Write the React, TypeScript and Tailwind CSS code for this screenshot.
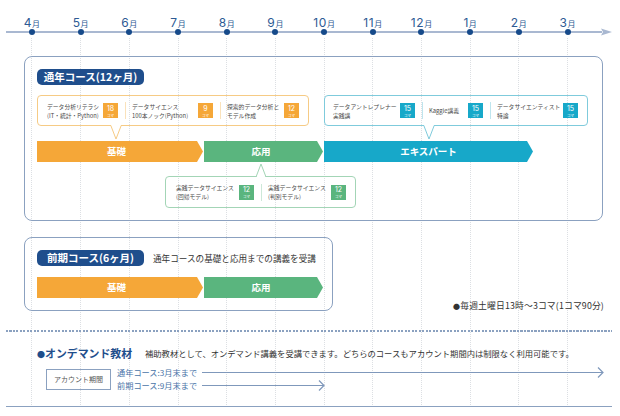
const months = ["4", "5", "6", "7", "8", "9", "10", "11", "12", "1", "2", "3"];

const fontStack = "font-['Noto_Sans_CJK_JP','Noto_Sans',sans-serif]";

function Badge({ n, color }: { n: string; color: string }) {
  return (
    <div className={`w-[15px] h-[15px] shrink-0 flex flex-col items-center justify-center text-white font-['Inter',sans-serif] ${color}`}>
      <span className="text-[7px] leading-[9px]">{n}</span>
      <span className="text-[3.5px] leading-[5px] font-['Noto_Sans_CJK_JP',sans-serif]">コマ</span>
    </div>
  );
}

function Item({
  lines,
  n,
  color,
  textClass,
  sep,
}: {
  lines: string[];
  n: string;
  color: string;
  textClass: string;
  sep?: string;
}) {
  return (
    <>
      <div className={`shrink-0 text-[5.8px] leading-[9px] text-[#4a4a4a] whitespace-nowrap ${textClass}`}>
        {lines.map((l) => (
          <div key={l}>{l}</div>
        ))}
      </div>
      <Badge n={n} color={color} />
      {sep && <div className={`w-px h-[17px] ml-[7px] mr-[6px] shrink-0 ${sep}`} />}
    </>
  );
}

function Notch({ stroke, className, up }: { stroke: string; className: string; up?: boolean }) {
  return (
    <svg className={`absolute ${className}`} width="12" height="15" viewBox="0 0 12 15">
      {up ? (
        <>
          <path d="M1 15 L6 1 L11 15 Z" fill="#fff" />
          <path d="M1 14 L6 1 L11 14" fill="none" stroke={stroke} strokeWidth="1" />
        </>
      ) : (
        <>
          <path d="M1 0 L6 14 L11 0 Z" fill="#fff" />
          <path d="M1 1 L6 14 L11 1" fill="none" stroke={stroke} strokeWidth="1" />
        </>
      )}
    </svg>
  );
}

function Pill({ children }: { children: string }) {
  return (
    <div className="w-[107px] h-[16px] rounded-[5px] bg-[#1f4e8c] text-white text-[10.5px] leading-[16px] font-bold text-center shrink-0 whitespace-nowrap">
      {children}
    </div>
  );
}

function Bars() {
  return (
    <>
      <div className="w-[166px] h-[21px] bg-[#f5a738] text-white text-[9.5px] font-bold leading-[21px] text-center pr-[7px] [clip-path:polygon(0_0,160px_0,100%_50%,160px_100%,0_100%)]">
        基礎
      </div>
      <div className="w-[119px] h-[21px] ml-px bg-[#5ab57e] text-white text-[9.5px] font-bold leading-[21px] text-center pr-[5px] [clip-path:polygon(0_0,113px_0,100%_50%,113px_100%,0_100%)]">
        応用
      </div>
    </>
  );
}

function LongArrow({ width }: { width: number }) {
  return (
    <svg width={width} height="11" viewBox={`0 0 ${width} 11`} className="shrink-0">
      <path d={`M0 5.5 H${width - 1}`} stroke="#7f98bb" strokeWidth="1.2" />
      <path d={`M${width - 6} 0.5 L${width - 1} 5.5 L${width - 6} 10.5`} fill="none" stroke="#7f98bb" strokeWidth="1.2" />
    </svg>
  );
}

export default function App() {
  return (
    <div className={`relative w-[620px] h-[416px] overflow-hidden bg-white ${fontStack}`}>
      {/* month guide lines */}
      <div className="absolute top-[38px] left-[7.6px] h-[367px] grid grid-cols-[repeat(12,48.7px)]">
        {months.map((m, i) => (
          <div key={i} className="flex justify-center">
            <div className="h-full border-l border-dotted border-[#dcdfe3]" />
          </div>
        ))}
      </div>

      {/* timeline */}
      <div className="relative h-[56px]">
        <div className="absolute left-[6px] top-[31px] w-[596px] h-[2px] bg-[#a9b8d1]" />
        <svg className="absolute left-[601px] top-[28px]" width="11" height="8" viewBox="0 0 11 8">
          <path d="M0 0.5 L11 4 L0 7.5 L2 4 Z" fill="#a9b8d1" />
        </svg>
        <div className="relative pl-[7.6px] pt-[12px] grid grid-cols-[repeat(12,48.7px)]">
          {months.map((m, i) => (
            <div key={i} className="flex flex-col items-center">
              <div className="h-[16px] text-[#2d5a94] leading-[16px] whitespace-nowrap">
                <span className="text-[12px] font-['Inter',sans-serif] tracking-[0.6px]">{m}</span>
                <span className="text-[8px]">月</span>
              </div>
              <div className="mt-px w-[6px] h-[6px] rounded-full bg-[#164a8a]" />
            </div>
          ))}
        </div>
      </div>

      {/* full year course */}
      <section className="relative ml-[24px] w-[579px] h-[165px] border border-[#8ba1c0] rounded-[8px] pl-[12px] pt-[12px]">
        <Pill>通年コース(12ヶ月)</Pill>

        <div className="flex mt-[10px]">
          <div className="relative w-[272px] h-[31px] border border-[#f6cb85] rounded-[4px] pl-[9px] flex items-center">
            <Item lines={["データ分析リテラシ", "(IT・統計・Python)"]} n="18" color="bg-[#f5a738]" textClass="w-[56px]" sep="bg-[#fae2bb]" />
            <Item lines={["データサイエンス", "100本ノック(Python)"]} n="9" color="bg-[#f5a738]" textClass="w-[66px]" sep="bg-[#fae2bb]" />
            <Item lines={["探索的データ分析と", "モデル作成"]} n="12" color="bg-[#f5a738]" textClass="w-[57px]" />
            <Notch stroke="#f6cb85" className="left-[72px] top-[29px]" />
          </div>
          <div className="relative ml-[15px] w-[264px] h-[31px] border border-[#7fcbdc] rounded-[4px] pl-[8px] flex items-center">
            <Item lines={["データアントレプレナー", "実践講"]} n="15" color="bg-[#17a8c9]" textClass="w-[67px]" sep="bg-[#bfe5ee]" />
            <Item lines={["Kaggle講義"]} n="15" color="bg-[#17a8c9]" textClass="w-[39px]" sep="bg-[#bfe5ee]" />
            <Item lines={["データサイエンティスト", "特論"]} n="15" color="bg-[#17a8c9]" textClass="w-[66px]" />
            <Notch stroke="#7fcbdc" className="left-[98px] top-[29px]" />
          </div>
        </div>

        <div className="flex mt-[15px]">
          <Bars />
          <div className="w-[209px] h-[21px] ml-px bg-[#17a8c9] text-white text-[9.5px] font-bold leading-[21px] text-center [clip-path:polygon(0_0,203px_0,100%_50%,203px_100%,0_100%)]">
            エキスパート
          </div>
        </div>

        <div className="relative ml-[128px] mt-[14px] w-[191px] h-[32px] border border-[#a3d5b6] rounded-[4px] pl-[10px] flex items-center">
          <Item lines={["実践データサイエンス", "(回帰モデル)"]} n="12" color="bg-[#5ab57e]" textClass="w-[63px]" sep="bg-[#cde8d8]" />
          <Item lines={["実践データサイエンス", "(判別モデル)"]} n="12" color="bg-[#5ab57e]" textClass="w-[63px]" />
          <Notch up stroke="#a3d5b6" className="left-[89px] top-[-14px]" />
        </div>
      </section>

      {/* first half course and schedule note */}
      <div className="relative flex h-[74px] mt-[16px] ml-[24px] w-[580px]">
        <section className="w-[309px] h-[74px] border border-[#8ba1c0] rounded-[8px] pl-[12px] pt-[12px] shrink-0">
          <div className="flex items-center">
            <Pill>前期コース(6ヶ月)</Pill>
            <span className="ml-[9px] text-[8.6px] text-[#333] whitespace-nowrap">通年コースの基礎と応用までの講義を受講</span>
          </div>
          <div className="flex mt-[11px]">
            <Bars />
          </div>
        </section>
        <div className="ml-auto mt-[62px] text-[8.8px] leading-[13px] tracking-[0.15px] text-[#333] whitespace-nowrap">
          <span className="text-[7px]">●</span>毎週土曜日13時〜3コマ(1コマ90分)
        </div>
      </div>

      <div className="relative mt-[19px] ml-[6px] w-[606px] h-[2px] bg-[repeating-linear-gradient(90deg,#8ba1c0_0_2px,transparent_2px_3.5px)]" />

      {/* on demand */}
      <section className="relative pl-[37px] pt-[13px]">
        <div className="flex items-center h-[16px] whitespace-nowrap">
          <span className="w-[108px] shrink-0 font-bold text-[#1f4e8c] text-[10.9px]">
            <span className="text-[8px]">●</span>オンデマンド教材
          </span>
          <span className="text-[8.3px] text-[#333]">
            補助教材として、オンデマンド講義を受講できます。どちらのコースもアカウント期間内は制限なく利用可能です。
          </span>
        </div>
        <div className="flex items-center ml-[9px] mt-[5px]">
          <div className="w-[65px] h-[21px] border border-[#8ba1c0] text-[7px] leading-[19px] text-center text-[#555] shrink-0">
            アカウント期間
          </div>
          <div className="ml-[6px] text-[8.2px] leading-[13px] text-[#4a74a8] whitespace-nowrap">
            <div className="flex items-center h-[13px]">
              <span className="w-[85px]">通年コース:3月末まで</span>
              <LongArrow width={402} />
            </div>
            <div className="flex items-center h-[13px]">
              <span className="w-[85px]">前期コース:9月末まで</span>
              <LongArrow width={123} />
            </div>
          </div>
        </div>
      </section>

      <div className="absolute left-[6px] top-[406px] w-[606px] h-px bg-[#8ba1c0]" />
    </div>
  );
}
